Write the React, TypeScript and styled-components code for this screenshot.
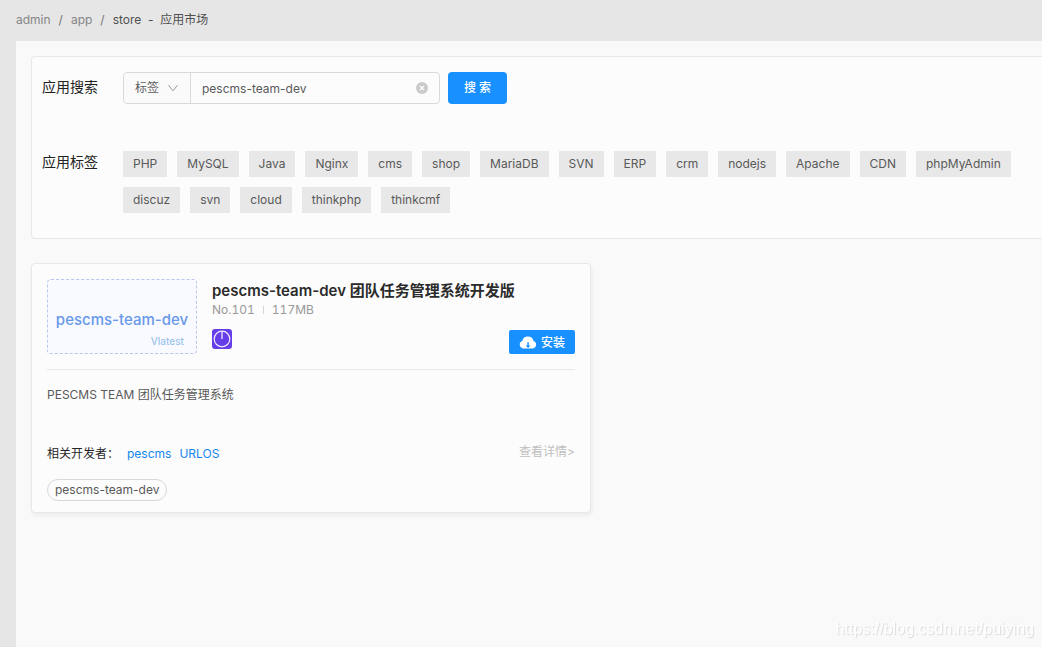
import React, { useState } from "react";
import styled, { createGlobalStyle } from "styled-components";

const GlobalStyle = createGlobalStyle`
  *, *::before, *::after { box-sizing: border-box; }
  body {
    margin: 0;
    background: #e6e6e6;
    color: #262626;
    font: 12px/18px Inter, "Noto Sans CJK SC", sans-serif;
  }
  button, input, select { font: inherit; margin: 0; }
  a { text-decoration: none; }
`;

const Page = styled.div`
  display: flex;
  flex-direction: column;
  min-height: 100vh;
  overflow-x: hidden;
`;

const Breadcrumb = styled.nav`
  display: flex;
  align-items: center;
  gap: 8px;
  height: 41px;
  padding: 0 16px 2px;
  color: #737373;
  white-space: pre;
`;

const Crumb = styled.a<{ $current?: boolean }>`
  color: ${(p) => (p.$current ? "#505050" : "#858585")};
`;

const Content = styled.main`
  flex: 1;
  margin-left: 16px;
  padding: 15px 0 15px 15px;
  background: #f9f9f9;
`;

const FilterPanel = styled.form`
  padding: 15px 10px 25px;
  border: 1px solid #e8e8e8;
  border-right: 0;
  border-radius: 4px 0 0 4px;
  background: #fcfcfc;
`;

const FilterRow = styled.div`
  display: flex;
  align-items: flex-start;

  & + & { margin-top: 47px; }
`;

const FilterLabel = styled.label`
  flex: 0 0 81px;
  font-size: 14px;
  line-height: 22px;
  color: #222;

  &[for] { padding-top: 4px; }
`;

const SearchBox = styled.div`
  display: flex;
  flex: 0 1 317px;
  height: 32px;
  border: 1px solid #d9d9d9;
  border-radius: 4px;
`;

const SelectWrap = styled.div`
  position: relative;
  flex: 0 0 67px;
  border-right: 1px solid #d9d9d9;
  background: #fafafa;
  border-radius: 4px 0 0 4px;

  svg {
    position: absolute;
    right: 12px;
    top: 10px;
    pointer-events: none;
  }
`;

const Select = styled.select`
  width: 100%;
  height: 30px;
  padding: 0 0 0 11px;
  border: 0;
  appearance: none;
  background: transparent;
  color: #5c5c5c;
`;

const SearchInput = styled.input`
  flex: 1;
  min-width: 0;
  padding: 1px 11px 0;
  border: 0;
  outline: 0;
  background: transparent;
  color: #595959;
`;

const ClearButton = styled.button`
  display: flex;
  align-items: center;
  padding: 0 11px;
  border: 0;
  background: none;
`;

const PrimaryButton = styled.button<{ $small?: boolean }>`
  display: flex;
  align-items: center;
  justify-content: center;
  gap: 4px;
  width: ${(p) => (p.$small ? "66px" : "59px")};
  height: ${(p) => (p.$small ? "24px" : "32px")};
  margin-left: ${(p) => (p.$small ? "auto" : "8px")};
  padding: ${(p) => (p.$small ? "2px 0 0" : "0")};
  border: 0;
  border-radius: ${(p) => (p.$small ? "2px" : "4px")};
  background: #1890ff;
  color: #fff;
  font-weight: 500;
`;

const TagList = styled.div`
  display: flex;
  flex: 1;
  flex-wrap: wrap;
  gap: 10px;
`;

const Tag = styled.button`
  height: 26px;
  padding: 0 10px;
  border: 0;
  background: #e8e8e8;
  color: #595959;
`;

const CardGrid = styled.div`
  display: flex;
  flex-wrap: wrap;
  gap: 24px;
  margin-top: 24px;
`;

const Card = styled.article`
  flex: 0 1 560px;
  padding: 15px 15px 11px;
  border: 1px solid #e8e8e8;
  border-radius: 4px;
  background: #fcfcfc;
  box-shadow: 1px 2px 4px rgba(0, 0, 0, 0.06);
`;

const CardHeader = styled.header`
  display: flex;
  gap: 15px;
  padding-bottom: 15px;
  border-bottom: 1px solid #e8e8e8;
`;

const Cover = styled.div`
  display: flex;
  flex: 0 0 150px;
  flex-direction: column;
  justify-content: flex-end;
  height: 75px;
  padding: 0 0 3px;
  border: 1px dashed #bcc5ee;
  border-radius: 4px;
  background: #f8faff;
  text-align: center;
`;

const CoverName = styled.span`
  font-size: 15px;
  font-weight: 500;
  line-height: 24px;
  color: #6898e8;
`;

const CoverVersion = styled.span`
  padding-right: 12px;
  font-size: 10px;
  font-weight: 500;
  line-height: 18px;
  text-align: right;
  color: #9cc4ea;
`;

const Summary = styled.div`
  flex: 1;
  min-width: 0;
`;

const Title = styled.h2`
  margin: 0;
  padding-top: 2px;
  font-size: 15px;
  font-weight: 600;
  line-height: 20px;
  color: #2b2b2b;
`;

const Meta = styled.div`
  display: flex;
  align-items: center;
  gap: 8px;
  color: #999;
  font-variant-numeric: tabular-nums;
`;

const MetaDivider = styled.span`
  width: 1px;
  height: 8px;
  background: #d5d5d5;
`;

const ActionRow = styled.div`
  display: flex;
  align-items: center;
  padding-top: 10px;

  > svg { margin-bottom: 5px; }
`;

const Description = styled.p`
  margin: 0;
  padding-top: 16px;
  height: 72px;
  color: #595959;
`;

const Developers = styled.div`
  display: flex;
  gap: 8px;
  padding-top: 3px;
`;

const DevLabel = styled.span`
  width: 72px;
  color: #262626;
`;

const DevLink = styled.a`
  color: #1486f0;
`;

const DetailLink = styled.a`
  margin: -2px 0 2px auto;
  color: #bfbfbf;
`;

const Pill = styled.span`
  display: inline-block;
  height: 22px;
  margin-top: 16px;
  padding: 1px 7px;
  border: 1px solid #d9d9d9;
  border-radius: 11px;
  line-height: 18px;
  color: #595959;
`;

const Watermark = styled.div`
  position: fixed;
  right: 8px;
  bottom: 9px;
  font: 16px/18px "Liberation Sans", sans-serif;
  color: #fff;
  text-shadow: 1px 1px 1px #dadada;
`;

const tags = [
  "PHP", "MySQL", "Java", "Nginx", "cms", "shop", "MariaDB", "SVN", "ERP", "crm",
  "nodejs", "Apache", "CDN", "phpMyAdmin", "discuz", "svn", "cloud", "thinkphp", "thinkcmf",
];

const ChevronIcon = () => (
  <svg width="10" height="10" viewBox="0 0 10 10" fill="none" stroke="#999" strokeWidth="1">
    <path d="M.5 2.2 5 7.8 9.5 2.2" />
  </svg>
);

const ClearIcon = () => (
  <svg width="12" height="12" viewBox="0 0 12 12">
    <circle cx="6" cy="6" r="6" fill="#cbcbcb" />
    <path d="M4 4 8 8M8 4 4 8" stroke="#fff" strokeWidth="1.1" />
  </svg>
);

const CloudIcon = () => (
  <svg width="18" height="13" viewBox="0 0 18 13">
    <path
      fill="#fff"
      d="M4.2 12.4A3.9 3.9 0 0 1 3.2 4.9 5.9 5.9 0 0 1 14.6 4.9 3.9 3.9 0 0 1 13.8 12.4Z"
    />
    <path fill="#1890ff" d="M8.3 6.2h1.5v3.2h1.7L9.05 12.1 6.6 9.4h1.7Z" />
  </svg>
);

const PowerIcon = () => (
  <svg width="20" height="20" viewBox="0 0 20 20" fill="none">
    <rect width="20" height="20" rx="3" fill="#653ee8" />
    <circle cx="10" cy="10" r="7.8" stroke="#eee9ff" strokeWidth="1.2" />
    <path d="M10 2.2V10" stroke="#eee9ff" strokeWidth="1.3" />
  </svg>
);

export default function App() {
  const [query, setQuery] = useState("pescms-team-dev");

  return (
    <Page>
      <GlobalStyle />
      <Breadcrumb aria-label="breadcrumb">
        <Crumb href="#admin">admin</Crumb>
        <span>/</span>
        <Crumb href="#app">app</Crumb>
        <span>/</span>
        <Crumb href="#store" $current>{"store  -  应用市场"}</Crumb>
      </Breadcrumb>
      <Content>
        <FilterPanel onSubmit={(e) => e.preventDefault()}>
          <FilterRow>
            <FilterLabel htmlFor="query">应用搜索</FilterLabel>
            <SearchBox>
              <SelectWrap>
                <Select aria-label="搜索类型">
                  <option>标签</option>
                </Select>
                <ChevronIcon />
              </SelectWrap>
              <SearchInput
                id="query"
                type="text"
                value={query}
                onChange={(e) => setQuery(e.target.value)}
              />
              <ClearButton type="button" aria-label="清除" onClick={() => setQuery("")}>
                <ClearIcon />
              </ClearButton>
            </SearchBox>
            <PrimaryButton type="submit">搜 索</PrimaryButton>
          </FilterRow>
          <FilterRow>
            <FilterLabel as="span" id="tags-label">应用标签</FilterLabel>
            <TagList role="group" aria-labelledby="tags-label">
              {tags.map((tag) => (
                <Tag key={tag} type="button" onClick={() => setQuery(tag)}>{tag}</Tag>
              ))}
            </TagList>
          </FilterRow>
        </FilterPanel>
        <CardGrid>
          <Card>
            <CardHeader>
              <Cover>
                <CoverName>pescms-team-dev</CoverName>
                <CoverVersion>Vlatest</CoverVersion>
              </Cover>
              <Summary>
                <Title>pescms-team-dev 团队任务管理系统开发版</Title>
                <Meta>
                  <span>No.101</span>
                  <MetaDivider />
                  <span>117MB</span>
                </Meta>
                <ActionRow>
                  <PowerIcon />
                  <PrimaryButton type="button" $small>
                    <CloudIcon />
                    安装
                  </PrimaryButton>
                </ActionRow>
              </Summary>
            </CardHeader>
            <Description>PESCMS TEAM 团队任务管理系统</Description>
            <Developers>
              <DevLabel>相关开发者：</DevLabel>
              <DevLink href="#pescms">pescms</DevLink>
              <DevLink href="#urlos">URLOS</DevLink>
              <DetailLink href="#detail">查看详情&gt;</DetailLink>
            </Developers>
            <Pill>pescms-team-dev</Pill>
          </Card>
        </CardGrid>
      </Content>
      <Watermark>https://blog.csdn.net/puiying</Watermark>
    </Page>
  );
}
